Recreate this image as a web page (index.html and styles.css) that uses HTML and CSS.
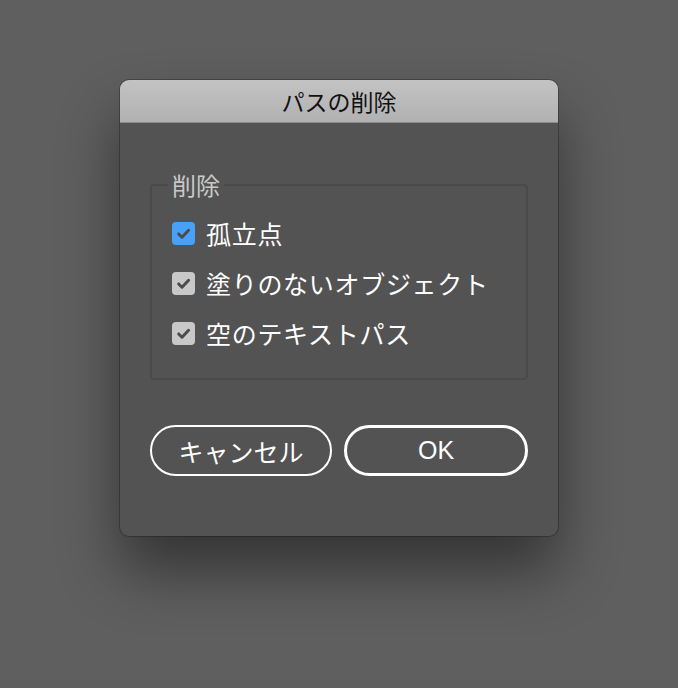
FILE: index.html
```html
<!DOCTYPE html>
<html lang="ja">
<head>
  <meta charset="UTF-8">
  <meta name="viewport" content="width=device-width, initial-scale=1.0">
  <title>パスの削除</title>
  <link rel="stylesheet" href="styles.css">
</head>
<body>
  <div class="dialog">
    <div class="titlebar">パスの削除</div>
    <div class="content">
      <fieldset class="group">
        <legend>削除</legend>
        <label class="option">
          <span class="box blue">
            <svg viewBox="0 0 24 24" width="24" height="24"><path d="M6.5 12.5l3.8 3.8 7.5-8" fill="none" stroke="#4b4b4b" stroke-width="3.4" stroke-linecap="round" stroke-linejoin="round"/></svg>
          </span>
          孤立点
        </label>
        <label class="option">
          <span class="box">
            <svg viewBox="0 0 24 24" width="24" height="24"><path d="M6.5 12.5l3.8 3.8 7.5-8" fill="none" stroke="#4b4b4b" stroke-width="3.4" stroke-linecap="round" stroke-linejoin="round"/></svg>
          </span>
          塗りのないオブジェクト
        </label>
        <label class="option">
          <span class="box">
            <svg viewBox="0 0 24 24" width="24" height="24"><path d="M6.5 12.5l3.8 3.8 7.5-8" fill="none" stroke="#4b4b4b" stroke-width="3.4" stroke-linecap="round" stroke-linejoin="round"/></svg>
          </span>
          空のテキストパス
        </label>
      </fieldset>
      <div class="buttons">
        <button class="btn">キャンセル</button>
        <button class="btn primary">OK</button>
      </div>
    </div>
  </div>
</body>
</html>
```

FILE: styles.css
```css
html, body {
  margin: 0;
  height: 100%;
}
body {
  background: #5f5f5f;
  font-family: "Noto Sans CJK JP", "Noto Sans", sans-serif;
  display: flex;
  justify-content: center;
  align-items: flex-start;
}
.dialog {
  margin-top: 80px;
  width: 438px;
  height: 456px;
  background: #535353;
  border-radius: 9px;
  overflow: hidden;
  box-shadow: 0 0 0 1px rgba(0, 0, 0, 0.25), 0 35px 60px rgba(0, 0, 0, 0.45);
  display: flex;
  flex-direction: column;
}
.titlebar {
  height: 42px;
  line-height: 42px;
  text-align: center;
  font-size: 23px;
  color: #111;
  background: linear-gradient(#c4c3c4, #b2b1b2);
  border-bottom: 1px solid #8d8d8d;
}
.content {
  padding: 49px 30px 0 30px;
}
.group {
  margin: 0;
  padding: 17px 20px 24px 20px;
  border: 2px solid #4a4a4a;
  border-radius: 4px;
  display: flex;
  flex-direction: column;
  gap: 14px;
  height: 208px;
  box-sizing: border-box;
}
.group legend {
  padding: 0 4px;
  margin-left: -4px;
  font-size: 24px;
  line-height: 26px;
  color: #c9c9c9;
}
.option {
  display: flex;
  align-items: center;
  gap: 11px;
  height: 36px;
  font-size: 25px;
  color: #fff;
  letter-spacing: 0.7px;
}
.box {
  width: 23px;
  height: 23px;
  border-radius: 4px;
  background: #c8c8c8;
  display: flex;
  align-items: center;
  justify-content: center;
}
.box svg {
  width: 21px;
  height: 21px;
}
.box.blue {
  background: #48a0f7;
}
.buttons {
  display: flex;
  gap: 12px;
  margin-top: 45px;
}
.btn {
  flex: 1;
  height: 51px;
  border: 2px solid #fff;
  border-radius: 26px;
  background: transparent;
  color: #fff;
  font-family: inherit;
  font-size: 25px;
  padding: 0;
}
.btn.primary {
  border-width: 3px;
  font-family: "Liberation Sans", "Noto Sans CJK JP", sans-serif;
  font-size: 25px;
}
```
